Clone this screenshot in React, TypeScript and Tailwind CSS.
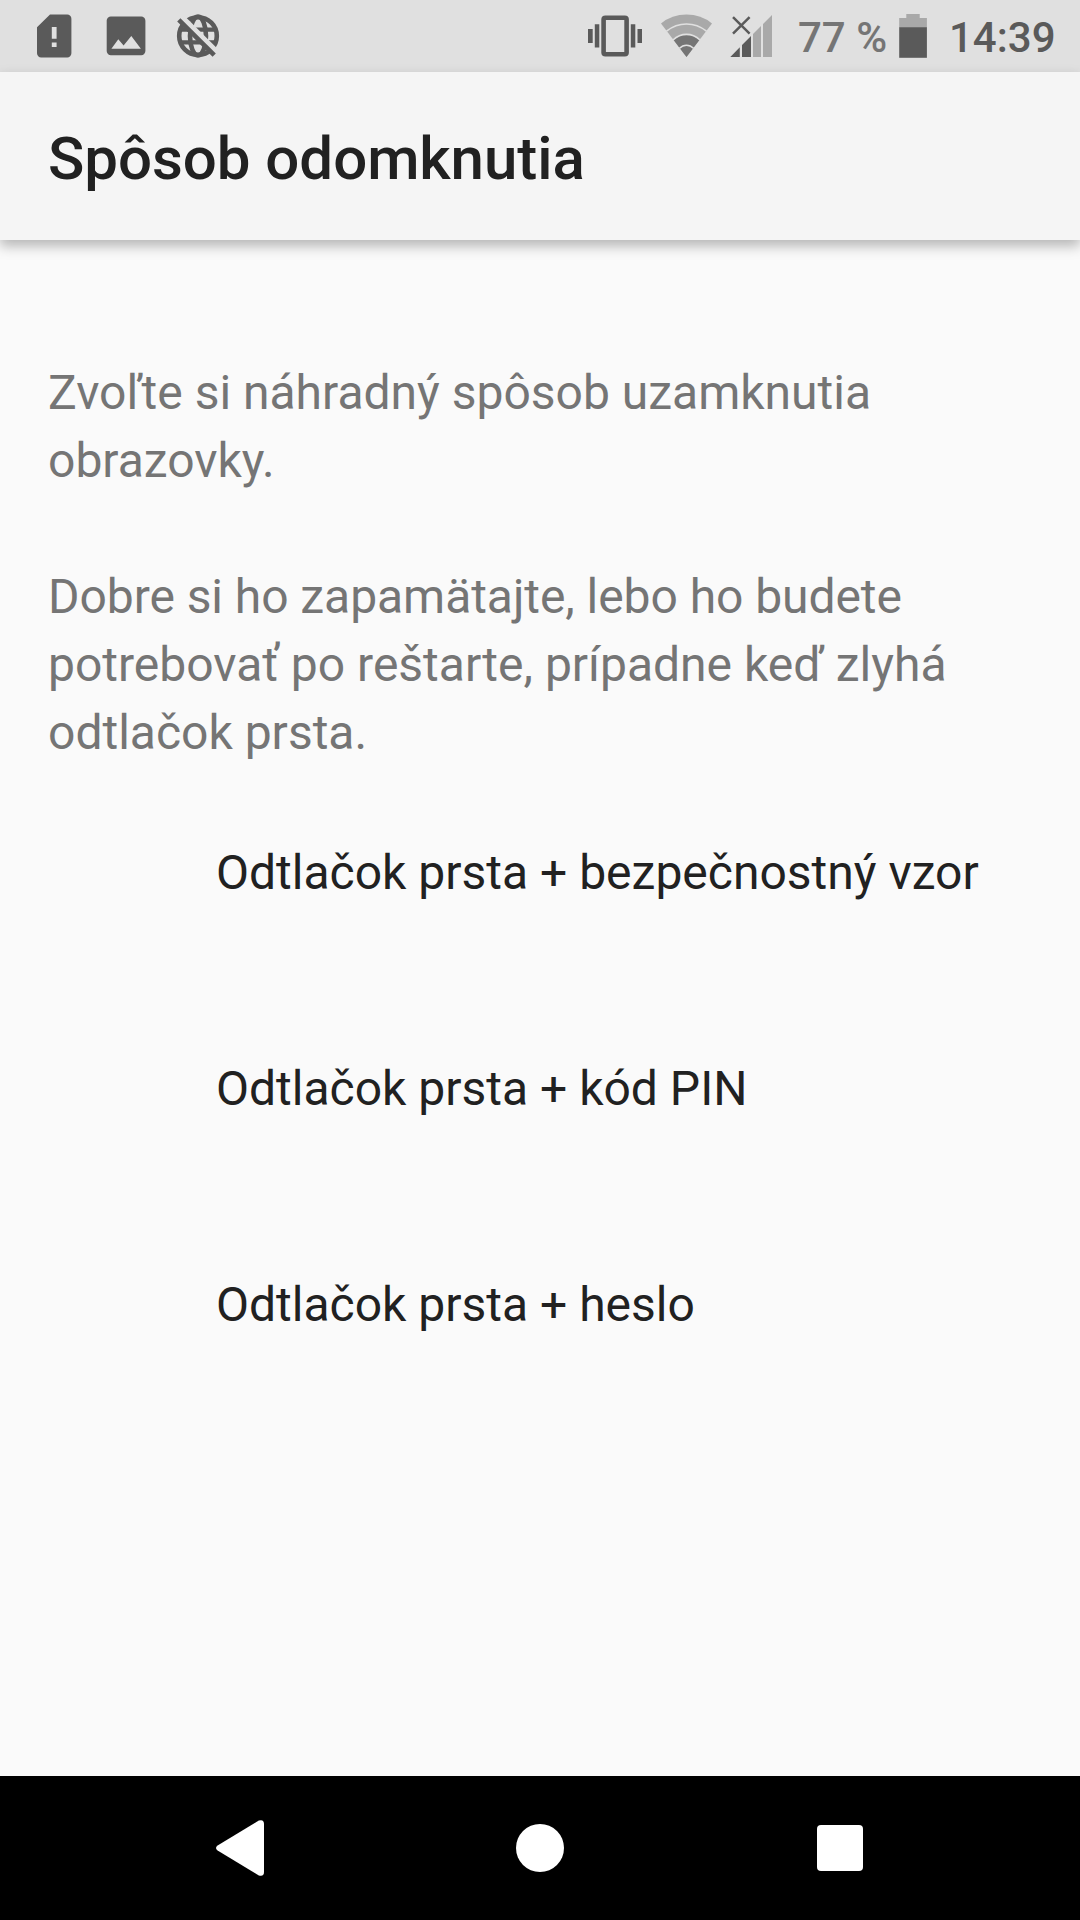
function SimAlertIcon() {
  return (
    <svg className="h-[72px] w-[35px] shrink-0" viewBox="37 0 35 72" fill="#5a5a5a">
      <path
        fillRule="evenodd"
        d="M50 14.5H67.2A4.2 4.2 0 0 1 71.4 18.7V53.2A4.2 4.2 0 0 1 67.2 57.4H41.2A4.2 4.2 0 0 1 37 53.2V27.3ZM51.8 27V38.7H56.6V27ZM51.8 42.5V47H56.6V42.5Z"
      />
    </svg>
  );
}

function PictureIcon() {
  return (
    <svg className="ml-[34px] h-[72px] w-[40px] shrink-0" viewBox="106 0 40 72" fill="#5a5a5a">
      <rect x="106.7" y="16.5" width="38.7" height="38.8" rx="4.2" />
      <path d="M111.4 48.8L118.3 39.2L123.6 45.4L131.3 36L140.9 48.8Z" fill="#e0e0e0" />
    </svg>
  );
}

function GlobeOffIcon() {
  return (
    <svg className="ml-[30px] h-[72px] w-[44px] shrink-0" viewBox="176 0 44 72" fill="none">
      <circle cx="198" cy="36" r="18.8" stroke="#5a5a5a" strokeWidth="4.6" />
      <ellipse cx="198" cy="36" rx="8" ry="19.4" stroke="#5a5a5a" strokeWidth="4.6" />
      <path d="M181 29.6H215M181 42.4H215" stroke="#5a5a5a" strokeWidth="4.4" />
      <path d="M180.8 15.8L218.4 53.4" stroke="#e0e0e0" strokeWidth="5.2" />
      <path d="M178.8 19.8L214.2 55.2" stroke="#5a5a5a" strokeWidth="4.6" />
    </svg>
  );
}

function VibrateIcon() {
  return (
    <svg className="h-[72px] w-[54px] shrink-0" viewBox="588 0 54 72" fill="#5a5a5a">
      <rect x="603.6" y="17.8" width="23" height="36.4" rx="1.8" fill="none" stroke="#5a5a5a" strokeWidth="4.6" />
      <path d="M588 29h4.7v14H588ZM594.8 24.3h4.5v23.2h-4.5ZM630.8 24.3h4.5v23.2h-4.5ZM637.5 29h4.7v14h-4.7Z" />
    </svg>
  );
}

function WifiIcon() {
  return (
    <svg className="ml-[19px] h-[72px] w-[51px] shrink-0" viewBox="661 0 51 72">
      <path d="M686.5 57L661 23.4Q672 14.5 686.5 14.5Q701 14.5 712 23.4Z" fill="#a9a9a9" />
      <path d="M686.5 57L673.6 40Q679 35 686.5 35Q694 35 699.4 40Z" fill="#757575" />
      <g fill="none" stroke="#e0e0e0" strokeWidth="1.6">
        <path d="M666.5 31.2Q675.5 24 686.5 24Q697.5 24 706.5 31.2" />
        <path d="M673 40Q679 34.4 686.5 34.4Q694 34.4 700 40" />
        <path d="M679.5 48.3Q682.5 45.2 686.5 45.2Q690.5 45.2 693.5 48.3" />
      </g>
    </svg>
  );
}

function SignalIcon() {
  return (
    <svg className="ml-[18px] h-[72px] w-[43px] shrink-0" viewBox="730 0 43 72">
      <path d="M730.3 57L739.8 47.3V57ZM742 45.1L751 36V57H742Z" fill="#5a5a5a" />
      <path d="M753 34L761 26V57H753ZM763 24L772 15V57H763Z" fill="#a9a9a9" />
      <path d="M733 17.2L749.6 33.6M749.6 17.2L733 33.6" stroke="#5a5a5a" strokeWidth="2.5" />
    </svg>
  );
}

function BatteryIcon() {
  return (
    <svg className="h-[72px] w-[28px] shrink-0" viewBox="899 0 28 72">
      <path d="M906.3 14h13.4v4h7.2v9.5h-27.7v-9.5h7.1Z" fill="#a9a9a9" />
      <path d="M899.2 27.2h27.7v30.6h-27.7Z" fill="#5a5a5a" />
    </svg>
  );
}

function StatusBar() {
  return (
    <div className="flex h-[72px] shrink-0 items-start bg-[#e0e0e0] pl-[37px] font-medium text-[#5a5a5a]">
      <SimAlertIcon />
      <PictureIcon />
      <GlobeOffIcon />
      <div className="ml-[368px] flex h-[72px]">
        <VibrateIcon />
        <WifiIcon />
        <SignalIcon />
        <span className="ml-[25px] w-[101px] text-[42px] leading-[76px] whitespace-nowrap text-[#757575]">77 %</span>
        <BatteryIcon />
        <span className="ml-[22px] text-[42px] leading-[76px]">14:39</span>
      </div>
    </div>
  );
}

const options = [
  "Odtlačok prsta + bezpečnostný vzor",
  "Odtlačok prsta + kód PIN",
  "Odtlačok prsta + heslo",
];

export default function App() {
  return (
    <div className="flex h-[1920px] w-[1080px] flex-col overflow-hidden bg-[#fafafa] font-['Roboto',sans-serif] text-[#212121]">
      <StatusBar />
      <header className="flex h-[168px] shrink-0 items-center bg-[#f5f5f5] pt-[5px] pl-12 text-[60px] font-medium tracking-[-0.04px] shadow-[0_6px_12px_rgba(0,0,0,0.28)]">
        <h1>Spôsob odomknutia</h1>
      </header>
      <main className="flex-1 pt-[119px]">
        <div className="px-12 text-[48px] leading-[68px] text-[#757575]">
          <p>
            Zvoľte si náhradný spôsob uzamknutia
            <br />
            obrazovky.
          </p>
          <p className="mt-[68px]">
            <span className="tracking-[-0.06px]">Dobre si ho zapamätajte, lebo ho budete</span>
            <br />
            potrebovať po reštarte, prípadne keď zlyhá
            <br />
            odtlačok prsta.
          </p>
        </div>
        <ul className="mt-[-2px] pl-[216px] text-[48px]">
          {options.map((option) => (
            <li key={option} className="flex h-[216px] items-center">
              {option}
            </li>
          ))}
        </ul>
      </main>
      <nav className="flex h-[144px] shrink-0 items-center bg-black pl-[216px]">
        <svg className="h-[56px] w-[48px]" viewBox="0 0 48 56" fill="#fff">
          <path d="M1.6 25.4L42.8 .6Q48 -1 48 4V52Q48 57 42.8 55.4L1.6 30.6Q-1.6 28 1.6 25.4Z" />
        </svg>
        <div className="ml-[252px] size-[48px] rounded-full bg-white" />
        <div className="ml-[253px] size-[46px] rounded-[4px] bg-white" />
      </nav>
    </div>
  );
}
